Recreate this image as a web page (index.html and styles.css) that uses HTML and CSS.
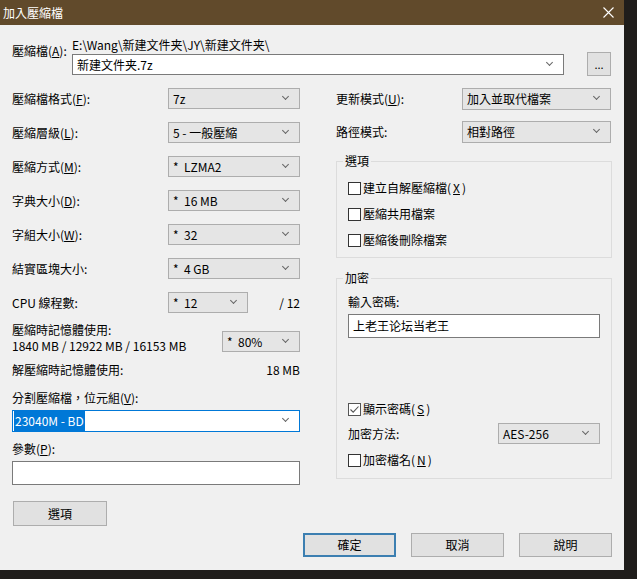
FILE: index.html
```html
<!DOCTYPE html>
<html lang="zh-TW">

<head>
    <meta charset="UTF-8">
    <meta name="viewport" content="width=device-width, initial-scale=1.0">
    <title>加入壓縮檔</title>
    <link rel="stylesheet" href="styles.css">
</head>

<body>

    <div class="dialog">
        <div class="titlebar">
            <span class="title">加入壓縮檔</span>
            <svg class="close" width="11" height="11" viewBox="0 0 11 11">
                <path d="M0.5 0.5 L10.5 10.5 M10.5 0.5 L0.5 10.5" stroke="#ffffff" stroke-width="1.1" fill="none" />
            </svg>
        </div>

        <div class="content">
            <!-- 壓縮檔路徑 -->
            <div class="archive">
                <div class="archive-label">壓縮檔(<u>A</u>):</div>
                <div class="archive-main">
                    <div class="path">E:\Wang\新建文件夹\JY\新建文件夹\</div>
                    <div class="combo">新建文件夹.7z</div>
                </div>
                <button class="btn browse">...</button>
            </div>

            <div class="columns">
                <!-- 左欄 -->
                <div class="left">
                    <div class="field"><span>壓縮檔格式(<u>F</u>):</span><div class="select">7z</div></div>
                    <div class="field"><span>壓縮層級(<u>L</u>):</span><div class="select">5 - 一般壓縮</div></div>
                    <div class="field"><span>壓縮方式(<u>M</u>):</span><div class="select">*&nbsp; LZMA2</div></div>
                    <div class="field"><span>字典大小(<u>D</u>):</span><div class="select">*&nbsp; 16 MB</div></div>
                    <div class="field"><span>字組大小(<u>W</u>):</span><div class="select">*&nbsp; 32</div></div>
                    <div class="field"><span>結實區塊大小:</span><div class="select">*&nbsp; 4 GB</div></div>
                    <div class="field cpu"><span>CPU 線程數:</span><div class="select short">*&nbsp; 12</div><span class="total">/ 12</span></div>

                    <div class="memory">
                        <div class="memory-text">
                            <div>壓縮時記憶體使用:</div>
                            <div>1840 MB / 12922 MB / 16153 MB</div>
                        </div>
                        <div class="select mem">*&nbsp; 80%</div>
                    </div>

                    <div class="decomp"><span>解壓縮時記憶體使用:</span><span>18 MB</span></div>

                    <div class="split-label">分割壓縮檔，位元組(<u>V</u>):</div>
                    <div class="combo focused"><span class="selected">23040M - BD</span></div>

                    <div class="param-label">參數(<u>P</u>):</div>
                    <div class="input"></div>

                    <button class="btn options">選項</button>
                </div>

                <!-- 右欄 -->
                <div class="right">
                    <div class="field wide"><span>更新模式(<u>U</u>):</span><div class="select">加入並取代檔案</div></div>
                    <div class="field wide second"><span>路徑模式:</span><div class="select">相對路徑</div></div>

                    <fieldset class="group">
                        <legend>選項</legend>
                        <div class="check"><span class="box"></span>建立自解壓縮檔(<u>X</u>)</div>
                        <div class="check"><span class="box"></span>壓縮共用檔案</div>
                        <div class="check"><span class="box"></span>壓縮後刪除檔案</div>
                    </fieldset>

                    <fieldset class="group crypt">
                        <legend>加密</legend>
                        <div class="pw-label">輸入密碼:</div>
                        <div class="input pw">上老王论坛当老王</div>
                        <div class="check show">
                            <span class="box checked">
                                <svg width="11" height="11" viewBox="0 0 11 11">
                                    <path d="M1.5 5.5 L4.2 8.2 L9.5 2.5" stroke="#555555" stroke-width="1.1" fill="none" />
                                </svg>
                            </span>顯示密碼(<u>S</u>)
                        </div>
                        <div class="method"><span>加密方法:</span><div class="select">AES-256</div></div>
                        <div class="check names"><span class="box"></span>加密檔名(<u>N</u>)</div>
                    </fieldset>
                </div>
            </div>

            <div class="actions">
                <button class="btn action default">確定</button>
                <button class="btn action">取消</button>
                <button class="btn action">說明</button>
            </div>
        </div>
    </div>

</body>

</html>
```

FILE: styles.css
```css
body,
html {
    margin: 0;
    background: #1f1d1b;
}

body {
    font-family: "Noto Sans CJK TC", "Liberation Sans", sans-serif;
    font-size: 12px;
    color: #000;
}

u {
    text-decoration: underline;
    text-underline-offset: 1px;
}

.dialog {
    width: 624px;
    height: 570px;
    background: #f0f0f0;
    overflow: hidden;
}

.titlebar {
    height: 25px;
    background: #614a2b;
    color: #fff;
    display: flex;
    align-items: center;
    justify-content: space-between;
    padding: 0 10px 0 3px;
    line-height: 16px;
}

.content {
    padding: 0 12px;
}

/* 通用控件 */
.select,
.combo,
.input {
    box-sizing: border-box;
    height: 21px;
    line-height: 19px;
    padding-left: 4px;
    white-space: nowrap;
    position: relative;
}

.select {
    background: #e5e5e5;
    border: 1px solid #adadad;
}

.combo {
    background: #fff;
    border: 1px solid #7a7a7a;
}

.select::after,
.combo::after {
    content: "";
    position: absolute;
    right: 11px;
    top: 5px;
    width: 4px;
    height: 4px;
    border-right: 1px solid #666;
    border-bottom: 1px solid #666;
    transform: rotate(45deg);
}

.input {
    background: #fff;
    border: 1px solid #7a7a7a;
    height: 24px;
    line-height: 22px;
}

.btn {
    box-sizing: border-box;
    background: #e1e1e1;
    border: 1px solid #adadad;
    font: inherit;
    line-height: 16px;
    padding: 0;
    color: #000;
}

/* 壓縮檔 */
.archive {
    display: flex;
    margin-top: 13px;
}

.archive-label {
    width: 60px;
    margin-top: 6px;
    line-height: 14px;
}

.archive-main {
    width: 492px;
}

.path {
    line-height: 14px;
    height: 14px;
    margin-bottom: 2px;
}

.browse {
    width: 24px;
    height: 24px;
    margin: 14px 0 0 23px;
    font-size: 11px;
}

/* 兩欄 */
.columns {
    display: grid;
    grid-template-columns: 288px 276px;
    column-gap: 36px;
    margin-top: 12px;
}

.field {
    display: grid;
    grid-template-columns: 156px 132px;
    align-items: center;
    height: 21px;
    margin-bottom: 13px;
    line-height: 16px;
}

.field.cpu {
    grid-template-columns: 156px 80px 1fr;
    margin-bottom: 9px;
}

.total {
    text-align: right;
}

.memory {
    display: flex;
    justify-content: space-between;
    height: 32px;
}

.memory-text {
    line-height: 16px;
}

.select.mem {
    width: 78px;
    margin-top: 9px;
}

.decomp {
    display: flex;
    justify-content: space-between;
    line-height: 16px;
    margin-top: 8px;
}

.split-label {
    line-height: 16px;
    margin-top: 12px;
}

.combo.focused {
    margin-top: 4px;
    height: 22px;
    line-height: 20px;
    border-color: #0078d7;
    padding-left: 1px;
}

.selected {
    background: #0078d7;
    color: #fff;
    padding: 1px 1px 2px;
}

.param-label {
    line-height: 16px;
    margin-top: 9px;
}

.param-label + .input {
    margin-top: 4px;
}

.options {
    display: block;
    width: 94px;
    height: 25px;
    margin: 16px 0 0 1px;
}

/* 右欄 */
.field.wide {
    grid-template-columns: 126px 149px;
    height: 22px;
    margin-bottom: 11px;
}

.field.wide .select {
    height: 22px;
    line-height: 20px;
}

.field.wide.second {
    margin-bottom: 10px;
}

.group {
    box-sizing: border-box;
    width: 276px;
    margin: 0;
    padding: 11px 11px 9px;
    border: 1px solid #dcdcdc;
    min-width: 0;
}

.group legend {
    padding: 0 2px;
    margin-left: -5px;
    line-height: 16px;
}

.check {
    display: flex;
    align-items: center;
    height: 16px;
    line-height: 16px;
    gap: 2px;
}

.check + .check {
    margin-top: 10px;
}

.box {
    box-sizing: border-box;
    width: 13px;
    height: 13px;
    border: 1px solid #333;
    background: #fff;
    display: flex;
    align-items: center;
    justify-content: center;
}

.box.checked {
    border-color: #555;
}

.crypt {
    margin-top: 12px;
    padding-top: 8px;
    padding-bottom: 10px;
}

.pw-label {
    line-height: 16px;
}

.input.pw {
    margin-top: 4px;
    width: 252px;
    padding-left: 4px;
}

.check.show {
    margin-top: 63px;
}

.method {
    display: grid;
    grid-template-columns: 150px 102px;
    align-items: center;
    margin-top: 6px;
    line-height: 16px;
}

.method .select {
    height: 21px;
    line-height: 19px;
}

.check.names {
    margin-top: 8px;
}

/* 底部按鈕 */
.actions {
    display: flex;
    justify-content: flex-end;
    gap: 15px;
    margin-top: 7px;
}

.action {
    width: 93px;
    height: 24px;
}

.action.default {
    border: 2px solid #3c7fb1;
}
```
